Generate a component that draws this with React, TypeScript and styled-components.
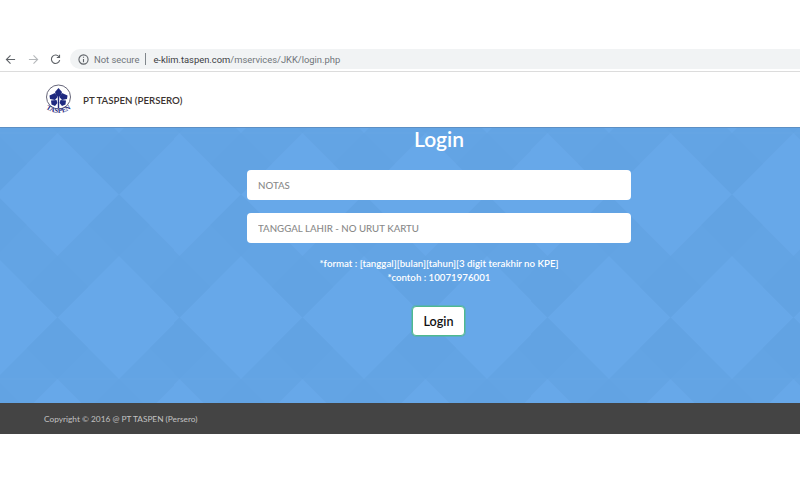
import React from "react";
import styled, { createGlobalStyle } from "styled-components";

const tile = encodeURIComponent(
  `<svg xmlns="http://www.w3.org/2000/svg" width="122.67" height="246" viewBox="0 0 122.67 246">
    <rect width="122.67" height="246" fill="#63a4e4"/>
    <path d="M61.33 0 L122.67 61.5 L61.33 123 L0 61.5Z" fill="#67a8e9"/>
    <path d="M0 123 L61.33 184.5 L0 246Z M122.67 123 L61.33 184.5 L122.67 246Z" fill="#67a8e9"/>
    <path d="M0 61.5 L30.67 92 L0 123Z M122.67 61.5 L92 92 L122.67 123Z M0 0 L30.67 30.75 L0 61.5Z M122.67 0 L92 30.75 L122.67 61.5Z" fill="#62a3e3"/>
    <path d="M61.33 123 L92 153.75 L61.33 184.5 L30.67 153.75Z M61.33 184.5 L92 215.25 L61.33 246 L30.67 215.25Z" fill="#62a3e3"/>
  </svg>`
);

const Global = createGlobalStyle`
  html, body { margin: 0; padding: 0; background: #fff; }
  body { font-family: "Lato", "Liberation Sans", sans-serif; }
`;

const Page = styled.div`
  width: 800px;
  height: 480px;
  overflow: hidden;
  display: flex;
  flex-direction: column;
  background: #fff;
`;

const BrowserBar = styled.div`
  margin-top: 48px;
  height: 24px;
  flex: none;
  box-sizing: border-box;
  padding-top: 1px;
  display: flex;
  align-items: flex-start;
  border-bottom: 1px solid #dcdcdc;
`;

const NavButton = styled.span<{ $w: number }>`
  width: ${(p) => p.$w}px;
  height: 20px;
  flex: none;
  display: flex;
  justify-content: center;
  align-items: center;
`;

const Omnibox = styled.div`
  flex: 1;
  height: 20px;
  margin-left: 4px;
  padding-left: 8px;
  background: #f1f3f4;
  border-radius: 10px 0 0 10px;
  display: flex;
  align-items: center;
  font-family: "Roboto", "Liberation Sans", sans-serif;
  font-size: 9.4px;
  color: #70757a;
`;

const Secure = styled.span`
  margin-left: 5px;
`;

const Divider = styled.span`
  width: 1px;
  height: 12px;
  margin: 0 7px 0 6px;
  background: #80868b;
`;

const Host = styled.span`
  color: #3c4043;
`;

const Header = styled.header`
  height: 55px;
  flex: none;
  display: flex;
  align-items: center;
  padding-left: 44px;
  gap: 10px;
  background: #fff;
`;

const Brand = styled.span`
  font-size: 9.7px;
  font-weight: 600;
  color: #3a3330;
`;

const Hero = styled.main`
  height: 276px;
  flex: none;
  box-sizing: border-box;
  border-top: 1px solid #5c8fc4;
  padding-left: 78px;
  display: flex;
  flex-direction: column;
  align-items: center;
  color: #fff;
  background-image: url("data:image/svg+xml,${tile}");
  background-position: -4px 5px;
`;

const Title = styled.h1`
  margin: 0;
  height: 24px;
  line-height: 22px;
  font-size: 21px;
  font-weight: 600;
`;

const Field = styled.input<{ $top: number }>`
  display: block;
  flex: none;
  width: 384px;
  height: 30px;
  box-sizing: border-box;
  border: none;
  border-radius: 4px;
  padding: 0 11px;
  background: #fff;
  font-family: inherit;
  font-size: 9.7px;
  font-weight: 500;
  outline: none;
  margin-top: ${(p) => p.$top}px;
  &::placeholder {
    color: #8a8a8a;
    opacity: 1;
  }
`;

const Note = styled.p`
  margin: 13px 0 0;
  font-size: 9.7px;
  font-weight: 600;
  line-height: 14px;
  text-align: center;
`;

const LoginButton = styled.button`
  margin: 22px 1px 0 0;
  width: 53px;
  height: 30px;
  box-sizing: border-box;
  background: #fff;
  border: 1px solid #4fb98f;
  box-shadow: 0 0 0 1px rgba(79, 185, 143, 0.45);
  border-radius: 4px;
  font-family: inherit;
  font-size: 12.6px;
  font-weight: 600;
  color: #111;
  padding: 0;
`;

const Footer = styled.footer`
  height: 31px;
  flex: none;
  box-sizing: border-box;
  padding: 1px 0 0 44px;
  display: flex;
  align-items: center;
  background: #444;
  color: #c2c2c2;
  font-size: 8.3px;
`;

const Logo = () => (
  <svg width="29" height="32" viewBox="0 0 29 32">
    <defs>
      <path id="taspen-arc" d="M0 23 Q 14.5 35 29 23" fill="none" />
    </defs>
    <circle cx="14.5" cy="13" r="12" fill="#fff" stroke="#55556a" strokeWidth="0.9" />
    <g fill="#1f2a80">
      <path d="M14.5 4 L18 8 L17 11.5 L14.5 13 L12 11.5 L11 8Z" />
      <path d="M11 9 L13.6 13 L11 16 L6 15 L5.5 11.5Z" />
      <path d="M18 9 L15.4 13 L18 16 L23 15 L23.5 11.5Z" />
      <path d="M7 16.5 L12.5 16 L13.4 19 L11 22 L7.5 20.5Z" />
      <path d="M22 16.5 L16.5 16 L15.6 19 L18 22 L21.5 20.5Z" />
      <rect x="13.8" y="11" width="1.4" height="13" />
    </g>
    <text fontFamily="'Liberation Serif', serif" fontSize="7" fontWeight="700" fill="#1f2a80" letterSpacing="0.1">
      <textPath href="#taspen-arc" startOffset="50%" textAnchor="middle">TASPEN</textPath>
    </text>
  </svg>
);

const Icon = ({ d, color }: { d: string; color: string }) => (
  <svg width="11" height="11" viewBox="0 0 12 12" fill="none" stroke={color} strokeWidth="1.2">
    <path d={d} />
  </svg>
);

export default function App() {
  return (
    <Page>
      <Global />
      <BrowserBar>
        <NavButton $w={21}><Icon d="M11 6H1.5M6 1.5L1.5 6L6 10.5" color="#5f6368" /></NavButton>
        <NavButton $w={24}><Icon d="M1 6h9.5M6 1.5L10.5 6L6 10.5" color="#b5b8bb" /></NavButton>
        <NavButton $w={21}><Icon d="M10 3.2A4.6 4.6 0 1 0 10.6 6.8M10.4 .8V3.8H7.4" color="#5f6368" /></NavButton>
        <Omnibox>
          <svg width="11" height="11" viewBox="0 0 12 12" fill="none" stroke="#5f6368" strokeWidth="1.2">
            <circle cx="6" cy="6" r="5" />
            <path d="M6 5.4V9M6 3V4.2" />
          </svg>
          <Secure>Not secure</Secure>
          <Divider />
          <Host>e-klim.taspen.com</Host>/mservices/JKK/login.php
        </Omnibox>
      </BrowserBar>
      <Header>
        <Logo />
        <Brand>PT TASPEN (PERSERO)</Brand>
      </Header>
      <Hero>
        <Title>Login</Title>
        <Field $top={18} placeholder="NOTAS" />
        <Field $top={13} placeholder="TANGGAL LAHIR - NO URUT KARTU" />
        <Note>
          *format : [tanggal][bulan][tahun][3 digit terakhir no KPE]
          <br />
          *contoh : 10071976001
        </Note>
        <LoginButton>Login</LoginButton>
      </Hero>
      <Footer>Copyright © 2016 @ PT TASPEN (Persero)</Footer>
    </Page>
  );
}
